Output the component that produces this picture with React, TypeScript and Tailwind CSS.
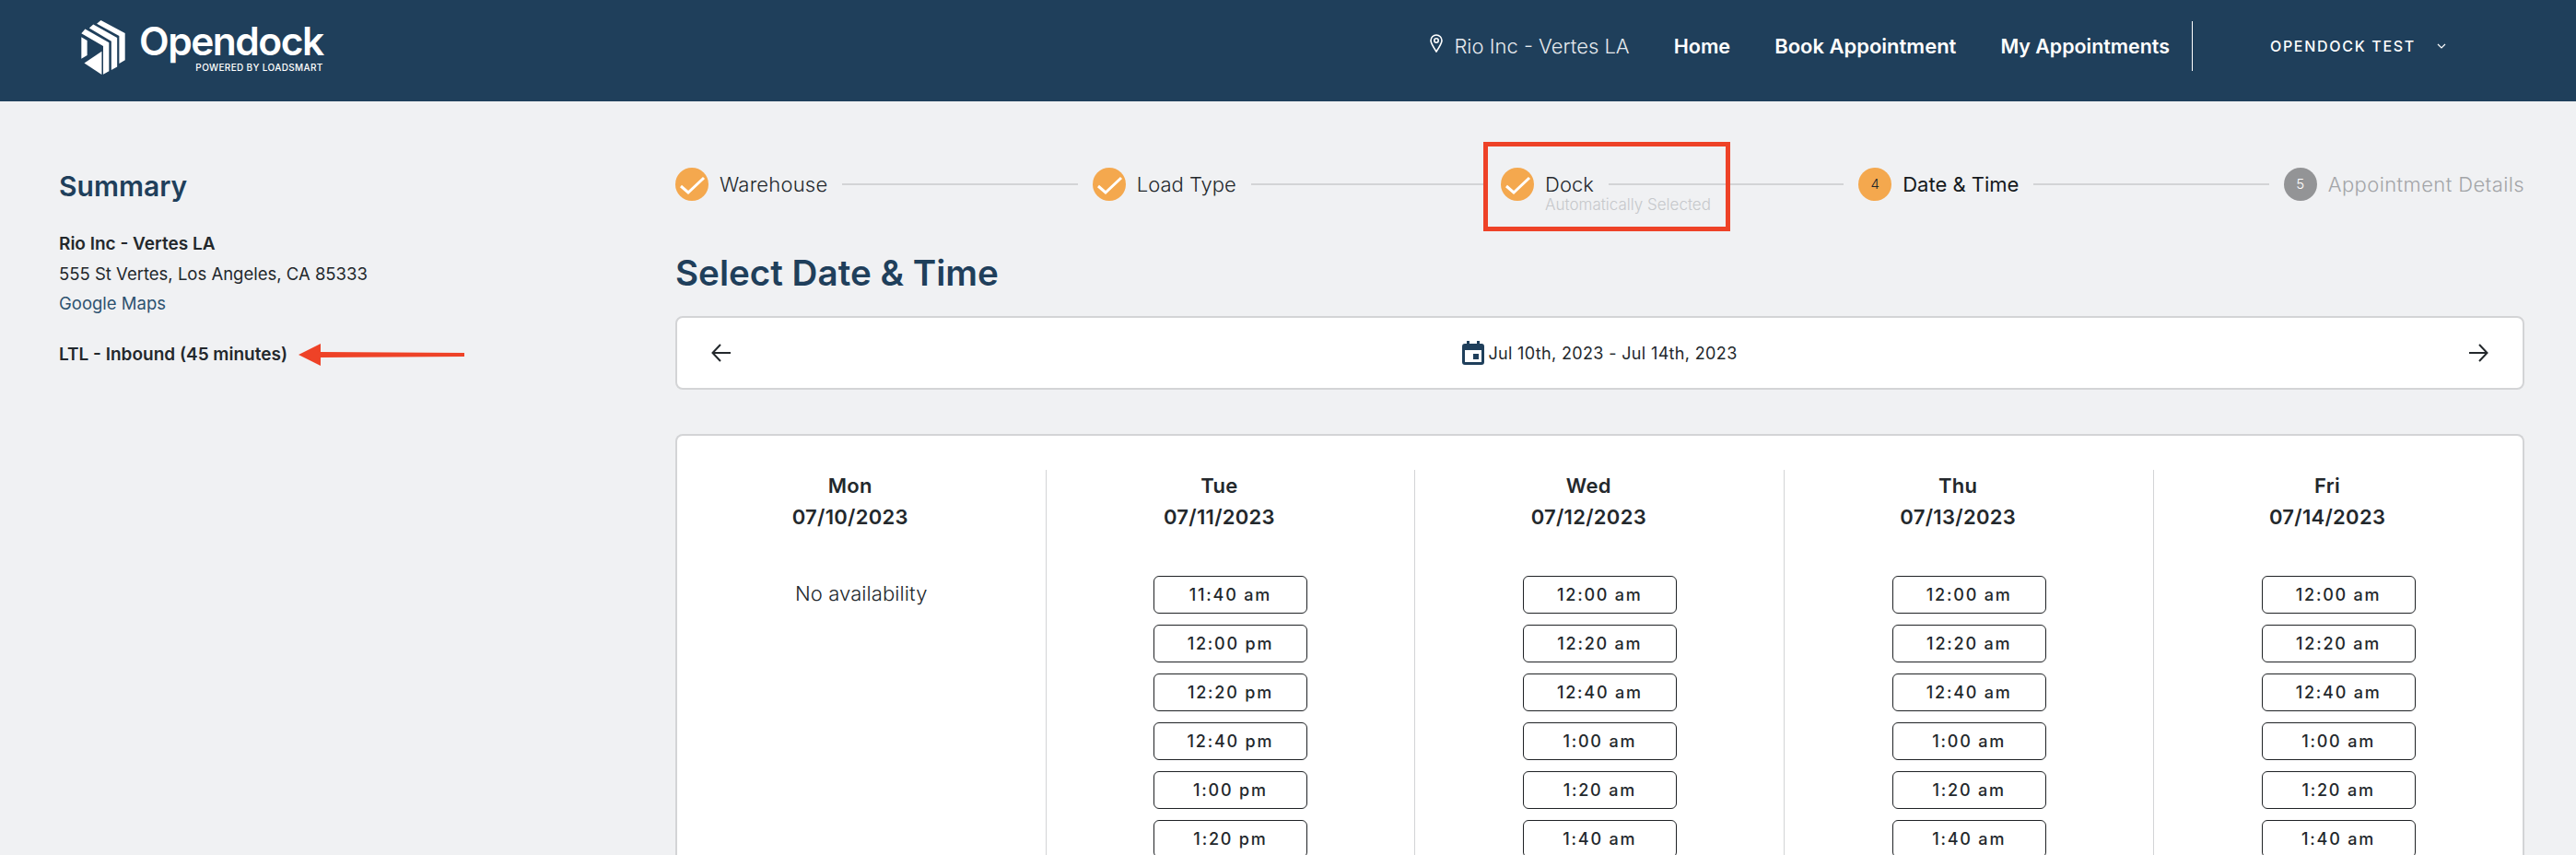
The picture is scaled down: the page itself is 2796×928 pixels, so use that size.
import React from "react";

const days = [
  { name: "Tue", date: "07/11/2023", slots: ["11:40 am", "12:00 pm", "12:20 pm", "12:40 pm", "1:00 pm", "1:20 pm"] },
  { name: "Wed", date: "07/12/2023", slots: ["12:00 am", "12:20 am", "12:40 am", "1:00 am", "1:20 am", "1:40 am"] },
  { name: "Thu", date: "07/13/2023", slots: ["12:00 am", "12:20 am", "12:40 am", "1:00 am", "1:20 am", "1:40 am"] },
  { name: "Fri", date: "07/14/2023", slots: ["12:00 am", "12:20 am", "12:40 am", "1:00 am", "1:20 am", "1:40 am"] },
];

function LogoMark() {
  return (
    <svg width="50" height="60" viewBox="25 18 150 190" fill="#fff" className="shrink-0">
      <polygon points="92,18 175,62 175,155 155,167 155,72 78,30" />
      <polygon points="66,32 148,78 148,178 128,189 128,90 52,45" />
      <polygon points="38,48 120,95 120,193 100,204 100,107 25,63" />
      <polygon points="25,76 45,88 45,138 25,150" />
      <polygon points="95,125 95,205 35,165" />
    </svg>
  );
}

function Check() {
  return (
    <span className="flex h-9 w-9 shrink-0 items-center justify-center rounded-full bg-[#f4a84e]">
      <svg width="36" height="36" viewBox="0 0 36 36" fill="none" stroke="#fff" strokeWidth="3">
        <path d="M6 20 L14 27 L31 11" />
      </svg>
    </span>
  );
}

function Line() {
  return <div className="mx-4 h-[1.5px] flex-1 bg-[#d3d4d6]" />;
}

function Stepper() {
  return (
    <div className="flex h-9 items-center text-[22px] font-light text-[#23282c]">
      <div className="flex items-center gap-3">
        <Check />
        <span className="tracking-[0.2px]">Warehouse</span>
      </div>
      <Line />
      <div className="flex items-center gap-3">
        <Check />
        <span>Load Type</span>
      </div>
      <Line />
      <div className="relative flex items-center gap-3">
        <Check />
        <span>Dock</span>
        <span className="absolute left-12 top-[28px] whitespace-nowrap text-[17px] text-[#c6c8cb]">
          Automatically Selected
        </span>
        <div className="absolute -left-[19px] -top-7 h-[97px] w-[268px] border-[5px] border-[#ee4227]" />
      </div>
      <Line />
      <div className="flex items-center gap-3">
        <span className="flex h-9 w-9 shrink-0 items-center justify-center rounded-full bg-[#f4a84e] text-[15px] text-[#23282c]">
          4
        </span>
        <span className="font-normal text-[#15191c]">Date &amp; Time</span>
      </div>
      <Line />
      <div className="flex items-center gap-3">
        <span className="flex h-9 w-9 shrink-0 items-center justify-center rounded-full bg-[#939496] text-[15px] text-white">
          5
        </span>
        <span className="tracking-[0.4px] text-[#a3a5a8]">Appointment Details</span>
      </div>
    </div>
  );
}

function Slot({ label }: { label: string }) {
  return (
    <button className="h-[41px] w-[167px] shrink-0 rounded-[6px] border border-[#1f2225] bg-white text-[18px] font-medium tracking-[1.8px] text-[#23282c]">
      {label}
    </button>
  );
}

function DayHead({ name, date }: { name: string; date: string }) {
  return (
    <div className="pr-6 text-center text-[22px] leading-[34px] font-semibold tracking-[0.3px] text-[#23282c]">
      <div>{name}</div>
      <div>{date}</div>
    </div>
  );
}

export default function App() {
  return (
    <div
      className="h-[928px] w-[2796px] overflow-hidden bg-[#f0f1f3]"
      style={{ fontFamily: "Inter, 'Liberation Sans', sans-serif" }}
    >
      <header className="flex h-[110px] items-center bg-[#1f3f5b] pr-[141px] pl-[87px] text-white">
        <div className="flex items-center gap-[14px] pb-[6px]">
          <LogoMark />
          <div className="flex flex-col items-end">
            <span className="text-[42.5px] leading-[40px] font-semibold tracking-[-1.5px]">Opendock</span>
            <span className="mt-[2px] text-[10px] leading-[12px] font-medium tracking-[0.35px]">POWERED BY LOADSMART</span>
          </div>
        </div>
        <nav className="ml-auto flex items-center pb-[10px]">
          <svg width="14" height="20" viewBox="0 0 14 20" fill="none" stroke="#fff" strokeWidth="1.6" className="mb-[6px]">
            <path d="M7 19 C3 13 1 10 1 7 A6 6 0 0 1 13 7 C13 10 11 13 7 19 Z" />
            <circle cx="7" cy="7" r="2.2" />
          </svg>
          <span className="ml-3 text-[22px] font-light text-[#e6eaee]">Rio Inc - Vertes LA</span>
          <span className="ml-12 text-[21.6px] font-semibold">Home</span>
          <span className="ml-12 text-[22px] font-semibold">Book Appointment</span>
          <span className="ml-12 text-[21.4px] font-semibold">My Appointments</span>
          <div className="ml-6 h-[54px] w-px bg-white" />
          <span className="ml-[84px] text-[16px] font-medium tracking-[1.7px]">OPENDOCK TEST</span>
          <svg width="10" height="6" viewBox="0 0 10 6" fill="none" stroke="#fff" strokeWidth="1.2" className="ml-[23px]">
            <path d="M1 1 L5 5 L9 1" />
          </svg>
        </nav>
      </header>

      <div className="flex">
        <aside className="w-[733px] shrink-0 pt-[74px] pl-16 text-[#23282c]">
          <h2 className="text-[30px] leading-9 font-semibold text-[#1f3f5b]">Summary</h2>
          <div className="mt-[29px] text-[18.5px] leading-[32px]">
            <div className="text-[19px] font-semibold">Rio Inc - Vertes LA</div>
            <div>555 St Vertes, Los Angeles, CA 85333</div>
            <div className="text-[#2d5270]">Google Maps</div>
          </div>
          <div className="relative mt-6 flex items-center text-[19px] leading-[32px] font-semibold">
            <span>LTL - Inbound (45 minutes)</span>
            <svg width="180" height="24" viewBox="0 0 180 24" className="ml-3 shrink-0">
              <polygon points="0,12 24,0 24,9 180,10 180,14 24,15 24,24" fill="#ee4227" />
            </svg>
          </div>
        </aside>

        <main className="w-[2007px] shrink-0 pt-[72px]">
          <Stepper />
          <h1 className="mt-[54px] text-[38.6px] leading-[48px] font-semibold text-[#1f3f5b]">Select Date &amp; Time</h1>
          <div className="mt-[23px] flex h-20 items-center justify-between rounded-lg border-2 border-[#d3d4d6] bg-white pr-9 pl-9">
            <svg width="24" height="24" viewBox="0 0 24 24" fill="none" stroke="#23282c" strokeWidth="2">
              <path d="M22 12 H3 M11 3 L2.5 12 L11 21" />
            </svg>
            <div className="flex items-center gap-1">
              <svg width="24" height="26" viewBox="0 0 24 26" fill="#1f3f5b">
                <path d="M5 0h3v3h8V0h3v3h2a3 3 0 0 1 3 3v17a3 3 0 0 1-3 3H3a3 3 0 0 1-3-3V6a3 3 0 0 1 3-3h2zM3 10v13h18V10z" />
                <rect x="12" y="14" width="6" height="6" />
              </svg>
              <span className="text-[18px] tracking-[0.35px] text-[#23282c]">Jul 10th, 2023 - Jul 14th, 2023</span>
            </div>
            <svg width="24" height="24" viewBox="0 0 24 24" fill="none" stroke="#23282c" strokeWidth="2">
              <path d="M2 12 H21 M13 3 L21.5 12 L13 21" />
            </svg>
          </div>

          <div className="mt-12 grid grid-cols-[399.5px_repeat(4,1fr)] rounded-t-lg border-2 border-b-0 border-[#d3d4d6] bg-white pt-[37px] pb-10">
            <div className="flex flex-col">
              <DayHead name="Mon" date="07/10/2023" />
              <div className="mt-[52px] text-center text-[22px] leading-7 font-light tracking-[0.1px] text-[#23282c]">No availability</div>
            </div>
            {days.map((day) => (
              <div key={day.name} className="flex flex-col border-l border-[#d3d4d6]">
                <DayHead name={day.name} date={day.date} />
                <div className="mt-[47px] flex flex-col items-center gap-3">
                  {day.slots.map((slot) => (
                    <Slot key={slot} label={slot} />
                  ))}
                </div>
              </div>
            ))}
          </div>
        </main>
      </div>
    </div>
  );
}
